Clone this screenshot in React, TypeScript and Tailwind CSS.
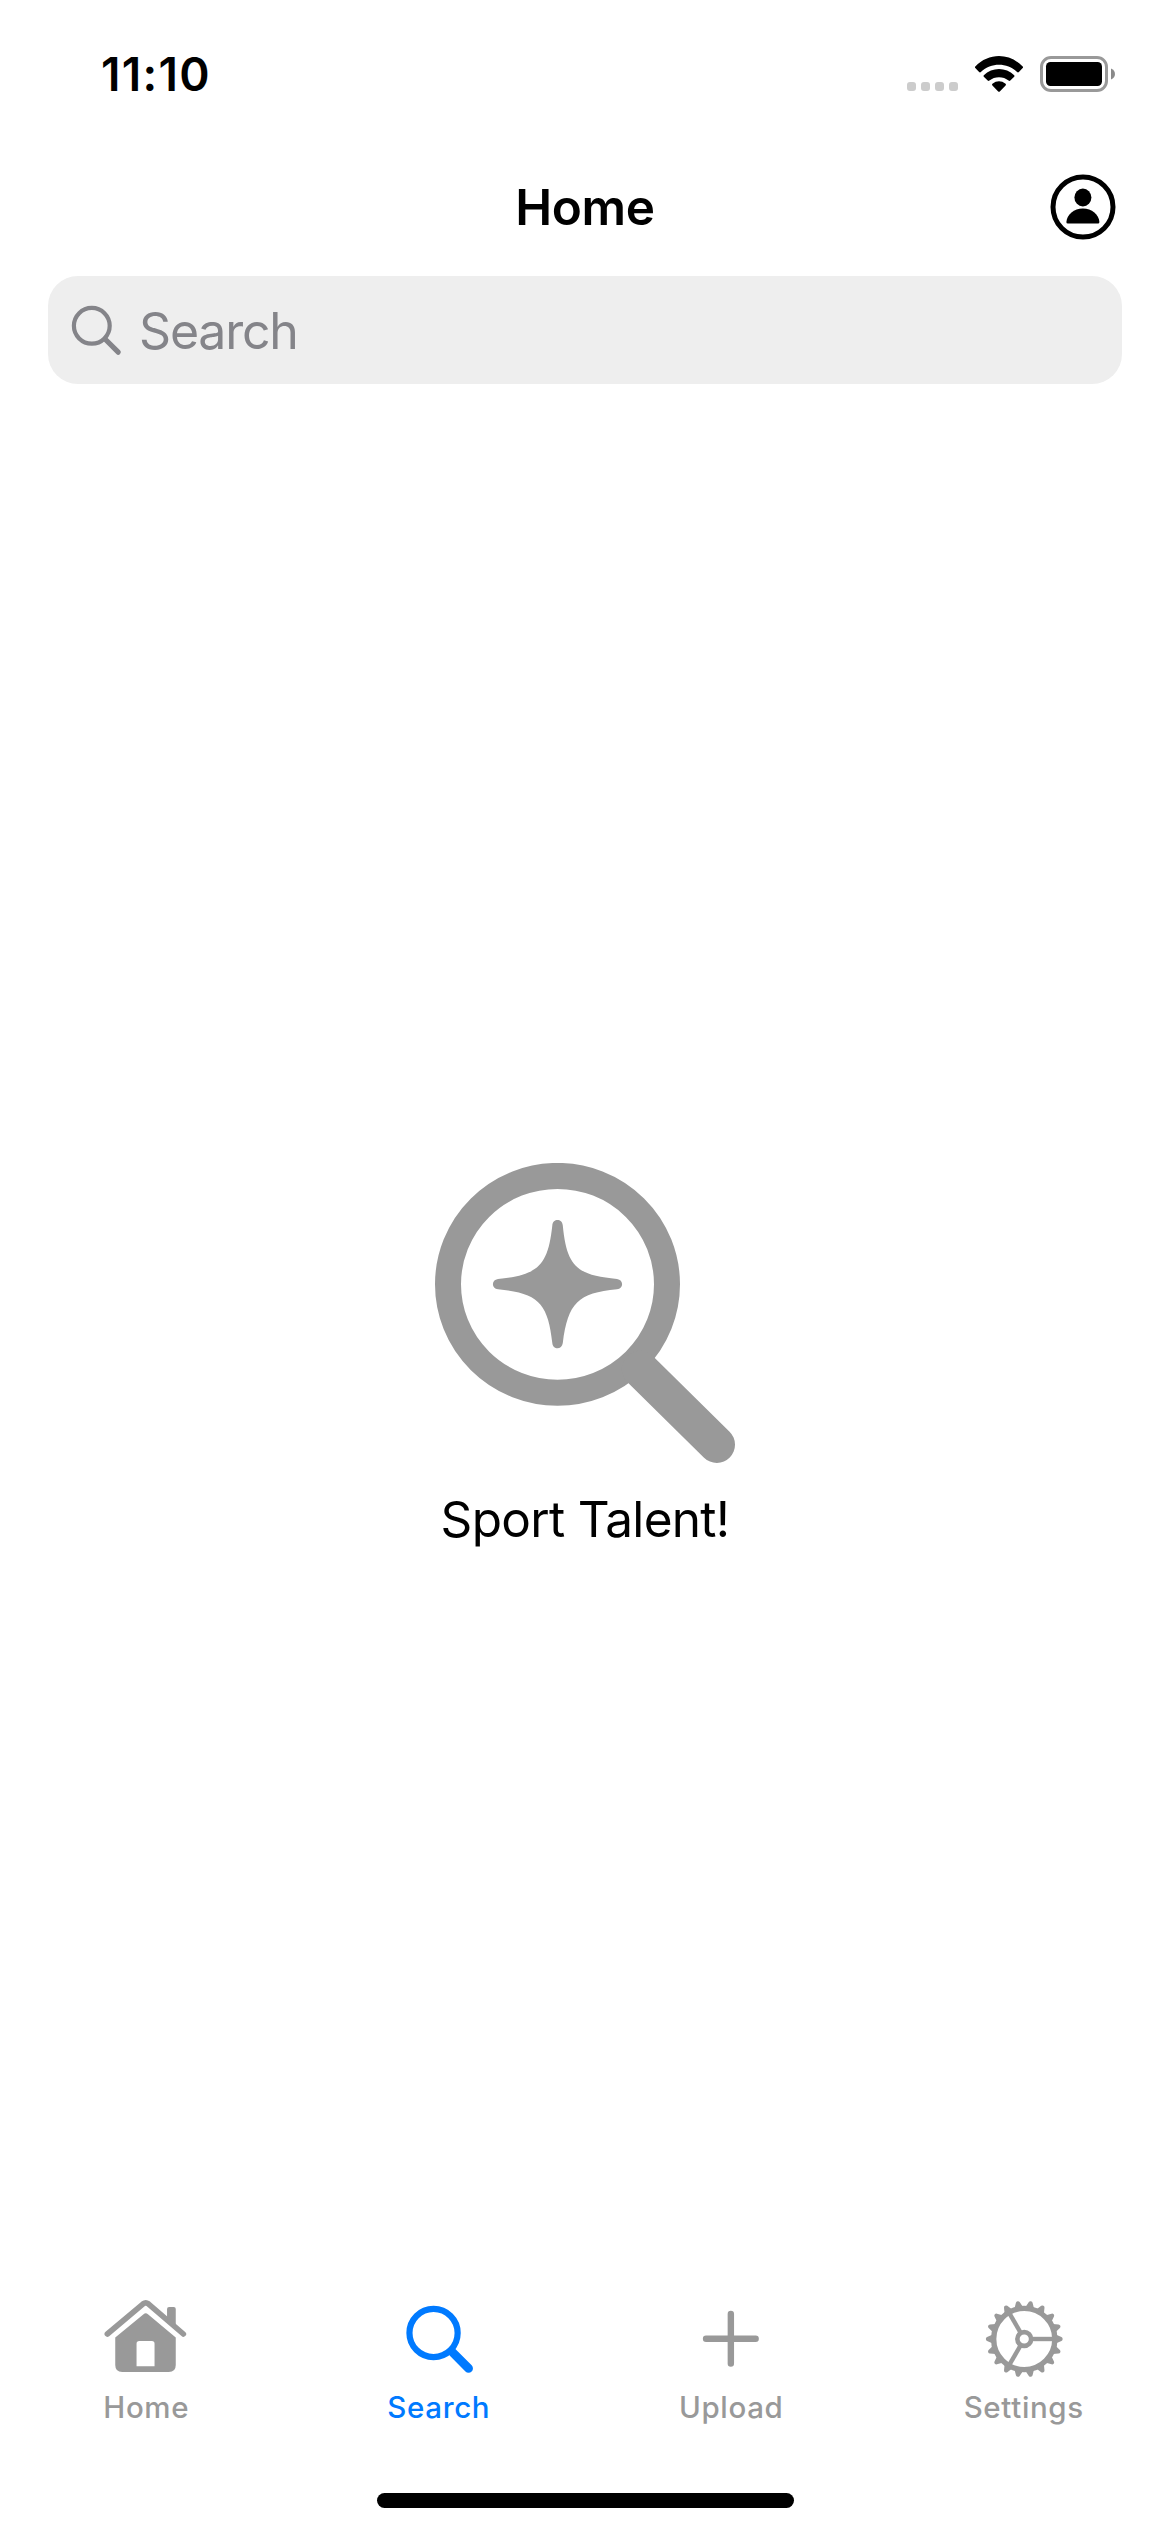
import type { ReactNode } from "react";

function WifiIcon() {
  return (
    <svg className="ml-[16px] h-[38px] w-[50px]" viewBox="974 54 50 38" fill="black">
      <path d="M975.3 65.6C988.5 51.6 1009.5 51.6 1022.7 65.6Q1023.4 66.3 1022.7 67.1L1018.9 71Q1018 71.9 1017.1 71C1006.8 61.3 991.2 61.3 980.9 71Q980 71.9 979.1 71L975.3 67.1Q974.6 66.3 975.3 65.6Z" />
      <path d="M983.8 74.2C992.1 65.9 1005.9 65.9 1014.2 74.2Q1014.9 75 1014.2 75.8L1010.3 79.6Q1009.5 80.4 1008.6 79.6C1003.4 75.1 994.6 75.1 989.4 79.6Q988.5 80.4 987.7 79.6L983.8 75.8Q983.1 75 983.8 74.2Z" />
      <path d="M992.4 82.8C996.6 79.5 1001.4 79.5 1005.6 82.8Q1006.4 83.6 1005.6 84.4L999.8 90.4Q999 91.2 998.2 90.4L992.4 84.4Q991.6 83.6 992.4 82.8Z" />
    </svg>
  );
}

function BatteryIcon() {
  return (
    <svg className="ml-[16px] h-[38px] w-[76px]" viewBox="1040 55 76 38">
      <rect x="1041.5" y="57.5" width="65" height="33" rx="9.5" fill="none" stroke="#999" strokeWidth="3" />
      <rect x="1046" y="62" width="56" height="24" rx="4.5" />
      <path d="M1111 68.5C1116.3 70.5 1116.3 77.5 1111 79.5Z" fill="#8a8a8a" />
    </svg>
  );
}

function ProfileIcon() {
  return (
    <svg className="h-[66px] w-[66px]" viewBox="1049.5 173.5 66 66">
      <circle cx="1082.5" cy="206.5" r="30" fill="none" stroke="black" strokeWidth="5" />
      <ellipse cx="1082.4" cy="197" rx="8.5" ry="9" />
      <path d="M1067.3 223Q1065.8 223 1065.9 221.5C1066.4 214 1073.5 208 1082.4 208S1098.4 214 1098.9 221.5Q1099 223 1097.5 223Z" />
    </svg>
  );
}

function SearchFieldIcon() {
  return (
    <svg className="h-[52px] w-[52px]" viewBox="70 304 52 52" fill="none" stroke="#848489">
      <circle cx="91.8" cy="325.8" r="17.9" strokeWidth="4.2" />
      <path d="M105 339L118.2 352.2" strokeWidth="5.2" strokeLinecap="round" />
    </svg>
  );
}

function TalentIcon() {
  return (
    <svg className="h-[300px] w-[300px]" viewBox="435 1163 300 300">
      <ellipse cx="557.5" cy="1284.3" rx="109.5" ry="108.4" fill="none" stroke="#999" strokeWidth="26" />
      <path d="M640 1369L716.8 1444.7" stroke="#999" strokeWidth="36.4" strokeLinecap="round" />
      <path
        fill="#999"
        d="M552.3 1225.5C552.8 1218.3 562.2 1218.3 562.8 1225.5C566.8 1268 578 1275 617 1279C623.8 1279.8 623.8 1288.6 617 1289.3C578 1293 568 1303 562.8 1343C562 1350 552.8 1350 552.3 1343C548 1303 538 1293 498 1289.3C491.2 1288.6 491.2 1279.8 498 1279C538 1275 548 1266 552.3 1225.5Z"
      />
    </svg>
  );
}

function HomeIcon() {
  return (
    <svg className="h-[80px] w-[90px]" viewBox="101.25 2299 90 80" fill="#999">
      <path d="M107.6 2334L143.4 2303.8Q146 2301.8 148.6 2303.8L183.6 2334" fill="none" stroke="#999" strokeWidth="5.6" strokeLinecap="round" strokeLinejoin="round" />
      <path d="M167.3 2322V2309Q167.3 2307 169.3 2307H174Q176 2307 176 2309V2326Z" />
      <path
        fillRule="evenodd"
        d="M143.8 2314.2Q146 2312.4 148.2 2314.2L176 2337.5V2365Q176 2372 169 2372H122.5Q115.5 2372 115.5 2365V2337.5ZM139.5 2341Q136.8 2341 136.8 2343.7V2366.3H154.8V2343.7Q154.8 2341 152.1 2341Z"
      />
    </svg>
  );
}

function SearchTabIcon() {
  return (
    <svg className="h-[80px] w-[90px]" viewBox="393.75 2299 90 80" fill="none" stroke="#007aff">
      <circle cx="433.3" cy="2333" r="24.1" strokeWidth="6.2" />
      <path d="M452 2352L468.3 2368.4" strokeWidth="8.8" strokeLinecap="round" />
    </svg>
  );
}

function PlusIcon() {
  return (
    <svg className="h-[80px] w-[90px]" viewBox="686.25 2299 90 80" stroke="#999" strokeWidth="6.4" strokeLinecap="round">
      <path d="M706.3 2338.8H755.9M731.1 2314V2363.6" />
    </svg>
  );
}

const TEETH = Array.from({ length: 18 }, (_, i) => i * 20);

function GearIcon() {
  return (
    <svg className="h-[80px] w-[90px]" viewBox="-45.25 -40 90 80" fill="none" stroke="#999">
      <circle r="30.6" strokeWidth="5.4" />
      <circle r="6.9" strokeWidth="4.6" />
      {[0, 120, 240].map((a) => (
        <path key={a} d="M8 0H29" strokeWidth="4.4" transform={`rotate(${a})`} />
      ))}
      {TEETH.map((a) => (
        <path
          key={a}
          d="M32 -4.2L37.2 -1.9Q38.4 -1.4 38.4 0T37.2 1.9L32 4.2Z"
          fill="#999"
          stroke="none"
          transform={`rotate(${a})`}
        />
      ))}
    </svg>
  );
}

function Tab({ icon, label, active = false }: { icon: ReactNode; label: string; active?: boolean }) {
  return (
    <button className="flex flex-1 flex-col items-center">
      {icon}
      <span
        className={`mt-[10px] text-[29.5px] leading-[36px] font-medium tracking-[0.65px] ${
          active ? "text-[#007aff]" : "text-[#999]"
        }`}
      >
        {label}
      </span>
    </button>
  );
}

export default function App() {
  return (
    <div className="flex h-[2532px] w-[1170px] flex-col bg-white font-['Inter',sans-serif] text-black">
      <div className="flex h-[148px] items-center pr-[54px] pl-[101px]">
        <span className="text-[46px] leading-[60px] font-semibold tracking-[1.3px]">11:10</span>
        <div className="ml-auto flex items-center">
          <div className="mt-[25px] flex gap-[5px]">
            <i className="size-[9px] rounded-[3px] bg-[#ccc]" />
            <i className="size-[9px] rounded-[3px] bg-[#ccc]" />
            <i className="size-[9px] rounded-[3px] bg-[#ccc]" />
            <i className="size-[9px] rounded-[3px] bg-[#ccc]" />
          </div>
          <WifiIcon />
          <BatteryIcon />
        </div>
      </div>

      <header className="grid h-[118px] grid-cols-3 items-center pr-[54px] pl-[54px]">
        <span />
        <h1 className="text-center text-[49.5px] leading-[60px] font-semibold tracking-[-0.4px]">Home</h1>
        <button className="justify-self-end">
          <ProfileIcon />
        </button>
      </header>

      <div className="mx-[48px] mt-[10px] flex h-[108px] items-center rounded-[30px] bg-[#eee] pl-[22px]">
        <SearchFieldIcon />
        <span className="ml-[17px] mt-[2px] text-[50px] leading-[60px] tracking-[-1.2px] text-[#848489]">Search</span>
      </div>

      <main className="flex flex-1 flex-col items-center pt-[779px]">
        <TalentIcon />
        <p className="mt-[26px] text-[49.5px] leading-[60px] tracking-[-0.7px]">Sport Talent!</p>
      </main>

      <nav className="flex h-[192px]">
        <Tab icon={<HomeIcon />} label="Home" />
        <Tab icon={<SearchTabIcon />} label="Search" active />
        <Tab icon={<PlusIcon />} label="Upload" />
        <Tab icon={<GearIcon />} label="Settings" />
      </nav>
      <div className="flex h-[41px] justify-center pt-[2px]">
        <div className="h-[15px] w-[417px] rounded-full bg-black" />
      </div>
    </div>
  );
}
